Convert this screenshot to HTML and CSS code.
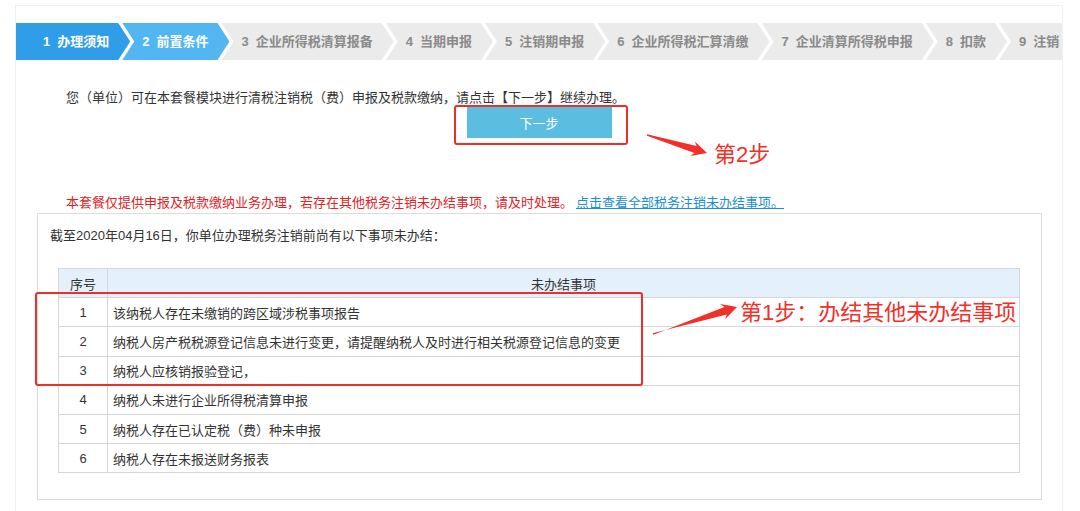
FILE: index.html
```html
<!DOCTYPE html>
<html lang="zh-CN">
<head>
    <meta charset="UTF-8">
    <meta name="viewport" content="width=device-width, initial-scale=1.0">
    <title>清税注销</title>
    <link rel="stylesheet" href="styles.css">
</head>
<body>
    <div class="panel">
        <ul class="steps">
            <li class="step done"><span class="num">1</span>办理须知</li>
            <li class="step current"><span class="num">2</span>前置条件</li>
            <li class="step"><span class="num">3</span>企业所得税清算报备</li>
            <li class="step"><span class="num">4</span>当期申报</li>
            <li class="step"><span class="num">5</span>注销期申报</li>
            <li class="step"><span class="num">6</span>企业所得税汇算清缴</li>
            <li class="step"><span class="num">7</span>企业清算所得税申报</li>
            <li class="step"><span class="num">8</span>扣款</li>
            <li class="step"><span class="num">9</span>注销</li>
        </ul>

        <p class="intro">您（单位）可在本套餐模块进行清税注销税（费）申报及税款缴纳，请点击【下一步】继续办理。</p>
        <div class="btn-row">
            <button class="next-btn">下一步</button>
        </div>

        <p class="notice">本套餐仅提供申报及税款缴纳业务办理，若存在其他税务注销未办结事项，请及时处理。<a class="notice-link" href="#">点击查看全部税务注销未办结事项。</a></p>

        <div class="todo-box">
            <p class="todo-title">截至2020年04月16日，你单位办理税务注销前尚有以下事项未办结：</p>
            <table class="todo-table">
                <thead>
                    <tr><th class="col-no">序号</th><th>未办结事项</th></tr>
                </thead>
                <tbody>
                    <tr><td class="col-no">1</td><td>该纳税人存在未缴销的跨区域涉税事项报告</td></tr>
                    <tr><td class="col-no">2</td><td>纳税人房产税税源登记信息未进行变更，请提醒纳税人及时进行相关税源登记信息的变更</td></tr>
                    <tr><td class="col-no">3</td><td>纳税人应核销报验登记，</td></tr>
                    <tr><td class="col-no">4</td><td>纳税人未进行企业所得税清算申报</td></tr>
                    <tr><td class="col-no">5</td><td>纳税人存在已认定税（费）种未申报</td></tr>
                    <tr><td class="col-no">6</td><td>纳税人存在未报送财务报表</td></tr>
                </tbody>
            </table>
        </div>
    </div>

    <!-- annotations drawn over the screenshot -->
    <div class="mark mark-btn"></div>
    <div class="mark mark-rows"></div>
    <svg class="arrows" width="1080" height="511" viewBox="0 0 1080 511">
        <polygon points="647,134.3 696.6,146 694.8,141.5 707,153 690.4,155.9 694.4,153 647,135.7" fill="#f2302a"/>
        <polygon points="652.6,333.2 726.8,314.5 725.1,319.2 737,307 720.2,304 724.4,306.9 653.4,334.8" fill="#f2302a"/>
    </svg>
    <div class="tip tip-2">第2步</div>
    <div class="tip tip-1">第1步：办结其他未办结事项</div>
</body>
</html>
```

FILE: styles.css
```css
body {
    margin: 0;
    padding: 5px 17px 0 15px;
    background-color: #fff;
    color: #333;
    font-family: "Liberation Sans", "Noto Sans CJK SC", sans-serif;
    font-size: 13px;
    overflow: hidden;
}
.panel {
    box-sizing: border-box;
    height: 506px;
    border: 1px solid #eef1f4;
    border-bottom: none;
    padding-top: 17px;
}

/* step bar */
.steps {
    display: flex;
    margin: 0;
    padding: 0;
    list-style: none;
    height: 37px;
    overflow: hidden;
}
.step {
    flex-shrink: 0;
    white-space: nowrap;
    height: 37px;
    line-height: 37px;
    padding: 0 21px 0 20px;
    margin-left: -8px;
    background-color: #ebebeb;
    color: #8a8a8a;
    font-weight: bold;
    clip-path: polygon(0 0, calc(100% - 12px) 0, 100% 50%, calc(100% - 12px) 100%, 0 100%, 12px 50%);
}
.step:first-child {
    margin-left: 0;
    padding-left: 27px;
    clip-path: polygon(0 0, calc(100% - 12px) 0, 100% 50%, calc(100% - 12px) 100%, 0 100%);
}
.step .num {
    margin-right: 7px;
}
.step.done {
    background-color: #2f9de7;
    color: #fff;
}
.step.current {
    background-color: #52b6f2;
    color: #fff;
}

/* intro */
.intro {
    margin: 30px 0 0;
    padding-left: 50px;
    line-height: 16px;
}
.btn-row {
    text-align: center;
    margin-top: 1px;
}
.next-btn {
    width: 145px;
    height: 31px;
    border: none;
    background-color: #5bbde0;
    color: #fff;
    font-family: inherit;
    font-size: 13px;
    cursor: pointer;
}

.notice {
    margin: 56px 0 0;
    padding-left: 50px;
    line-height: 18px;
    color: #e3231f;
}
.notice-link {
    margin-left: 3px;
    color: #1b8fd2;
}

/* unfinished items */
.todo-box {
    margin: 1px 20px 0 21px;
    border: 1px solid #dcdcdc;
    padding: 13px 0 26px;
}
.todo-title {
    margin: 0 0 23px 12px;
    line-height: 18px;
}
.todo-table {
    border-collapse: collapse;
    width: calc(100% - 41px);
    margin-left: 20px;
}
.todo-table th,
.todo-table td {
    border: 1px solid #d6d6d6;
    height: 28.2px;
    padding: 0 5px;
    font-weight: normal;
    text-align: left;
}
.todo-table th {
    background-color: #e4f0fb;
    text-align: center;
}
.todo-table .col-no {
    width: 38px;
    text-align: center;
}

/* annotations */
.mark {
    position: absolute;
    border: 2px solid #ec2f2a;
    border-radius: 3px;
}
.mark-btn {
    left: 454px;
    top: 105px;
    width: 170px;
    height: 36px;
}
.mark-rows {
    left: 35px;
    top: 292px;
    width: 604px;
    height: 90px;
}
.arrows {
    position: absolute;
    left: 0;
    top: 0;
    pointer-events: none;
}
.tip {
    position: absolute;
    color: #f2302a;
    font-size: 22px;
    line-height: 26px;
    white-space: nowrap;
}
.tip-2 {
    left: 714px;
    top: 142px;
}
.tip-1 {
    left: 740px;
    top: 300px;
}
```
